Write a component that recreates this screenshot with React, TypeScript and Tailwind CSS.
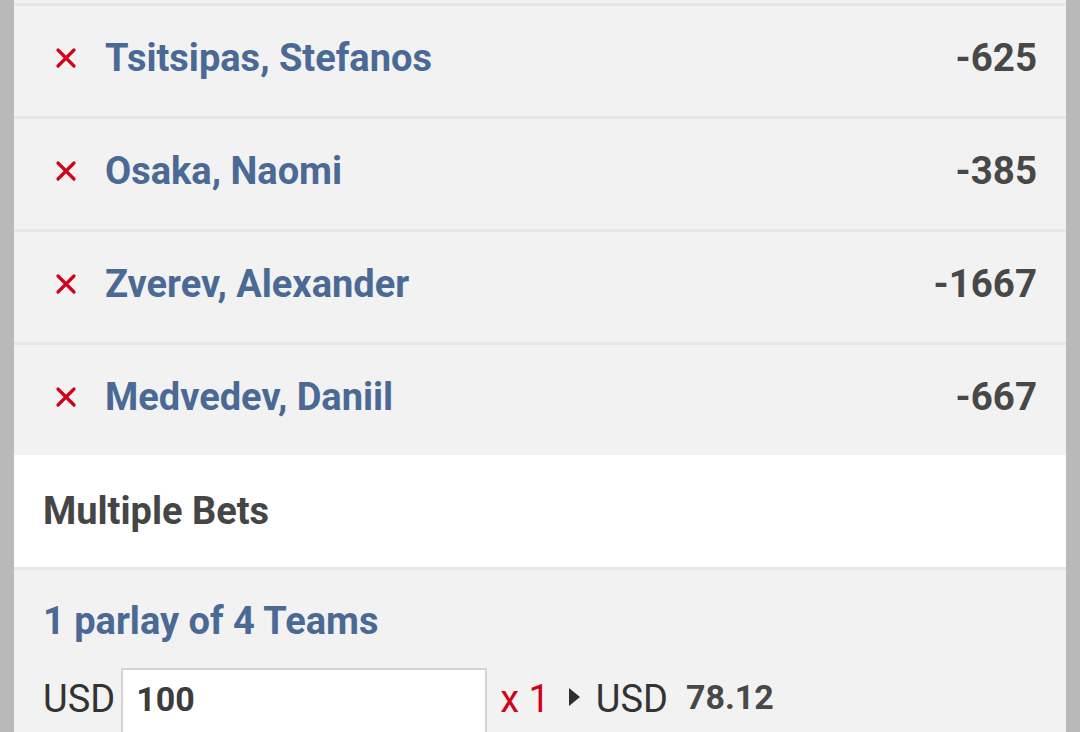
import React from 'react';

interface Selection {
  name: string;
  odds: string;
}

const selections: Selection[] = [
  { name: 'Tsitsipas, Stefanos', odds: '-625' },
  { name: 'Osaka, Naomi', odds: '-385' },
  { name: 'Zverev, Alexander', odds: '-1667' },
  { name: 'Medvedev, Daniil', odds: '-667' },
];

const RemoveIcon: React.FC = () => (
  <svg width="22" height="22" viewBox="0 0 22 22" className="shrink-0">
    <path d="M3 3 L19 19 M19 3 L3 19" stroke="#d0021b" strokeWidth="3.2" strokeLinecap="round" />
  </svg>
);

const App: React.FC = () => {
  return (
    <div
      className="min-h-screen w-full bg-[#b9b9b9] px-[14px] overflow-hidden"
      style={{ fontFamily: 'Roboto, "Noto Sans", sans-serif' }}
    >
      <div className="h-[732px] bg-[#f2f2f2] pt-[3px]">
        {selections.map((s) => (
          <div
            key={s.name}
            className="flex h-[113px] items-center border-t-[3px] border-[#e6e6e6] pb-[6px] pl-[41px] pr-[29px]"
          >
            <RemoveIcon />
            <span className="ml-[28px] text-[38px] font-bold text-[#4a6994] leading-none">{s.name}</span>
            <span className="ml-auto text-[38.5px] font-bold text-[#484848] leading-none">{s.odds}</span>
          </div>
        ))}

        <div className="flex h-[115px] items-center border-b-[3px] border-[#e6e6e6] bg-white px-[29px]">
          <span className="text-[38px] font-bold text-[#454545] leading-none">Multiple Bets</span>
        </div>

        <div className="px-[29px] pt-[32px]">
          <div className="text-[38px] font-bold text-[#4a6994] leading-none">1 parlay of 4 Teams</div>
          <div className="mt-[28px] flex items-start">
            <span className="mt-[12px] text-[38px] text-[#333] leading-none">USD</span>
            <div className="ml-[6px] h-[80px] w-[366px] border-2 border-[#d4d4d4] bg-white px-[13px] pt-[12px]">
              <span className="text-[34px] font-bold text-[#3c3c3c] leading-none">100</span>
            </div>
            <span className="ml-[13px] mt-[12px] text-[38px] text-[#d0021b] leading-none">x 1</span>
            <svg width="13" height="20" viewBox="0 0 13 20" className="ml-[18px] mt-[19px]">
              <path d="M1 1 L12 10 L1 19 Z" fill="#2f2f2f" />
            </svg>
            <span className="ml-[15px] mt-[12px] text-[38px] text-[#333] leading-none">USD</span>
            <span className="ml-[18px] mt-[12px] text-[34px] font-bold text-[#484848] leading-none">78.12</span>
          </div>
        </div>
      </div>
    </div>
  );
};

export default App;
